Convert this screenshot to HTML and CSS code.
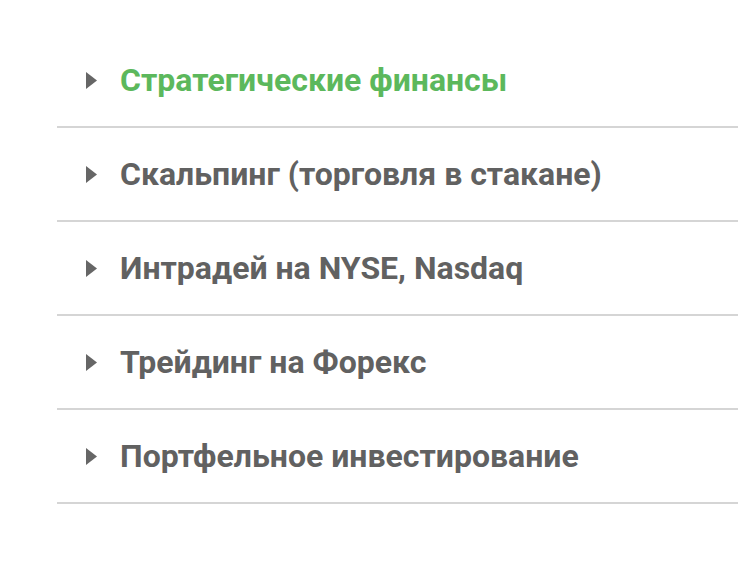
FILE: index.html
```
<!DOCTYPE html>
<html>
<head>
<meta charset="utf-8" />
<title>Направления</title>
<link rel="stylesheet" href="styles.css">
</head>
<body>
<ul class="menu">
    <li class="menu-item active">
        <svg class="caret" width="11" height="17" viewBox="0 0 11 17"><polygon points="0,0 11,8.5 0,17" /></svg>
        <a href="#">Стратегические финансы</a>
    </li>
    <li class="menu-item">
        <svg class="caret" width="11" height="17" viewBox="0 0 11 17"><polygon points="0,0 11,8.5 0,17" /></svg>
        <a href="#">Скальпинг (торговля в стакане)</a>
    </li>
    <li class="menu-item">
        <svg class="caret" width="11" height="17" viewBox="0 0 11 17"><polygon points="0,0 11,8.5 0,17" /></svg>
        <a href="#">Интрадей на NYSE, Nasdaq</a>
    </li>
    <li class="menu-item">
        <svg class="caret" width="11" height="17" viewBox="0 0 11 17"><polygon points="0,0 11,8.5 0,17" /></svg>
        <a href="#">Трейдинг на Форекс</a>
    </li>
    <li class="menu-item">
        <svg class="caret" width="11" height="17" viewBox="0 0 11 17"><polygon points="0,0 11,8.5 0,17" /></svg>
        <a href="#">Портфельное инвестирование</a>
    </li>
</ul>
</body>
</html>
```

FILE: styles.css
```
body {
    margin:0;
    background:#fff;
    font-family:Roboto, "Liberation Sans", sans-serif;
}
.menu {/*список направлений*/
    list-style:none;
    margin:34px 0 0 57px;
    padding:0;
}
.menu-item {
    display:flex;
    align-items:center;
    height:92px;
    padding-left:29px;
    border-bottom:2px solid #d5d5d5;
}
.caret {
    fill:#666;
    margin-right:23px;
    flex-shrink:0;
}
.menu-item a {
    font-size:32px;
    font-weight:700;
    color:#616161;
    text-decoration:none;
}
.menu-item.active a {/*активный пункт*/
    color:#5cb85c;
}
```
